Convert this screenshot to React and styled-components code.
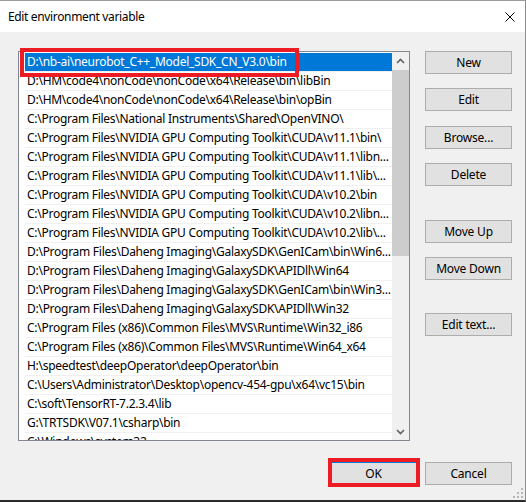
import React from 'react';
import styled, { createGlobalStyle } from 'styled-components';

const GlobalStyle = createGlobalStyle`
  html, body {
    margin: 0;
    padding: 0;
    background: #f0f0f0;
  }
  body {
    font-family: "Segoe UI", "Noto Sans", sans-serif;
    font-size: 12px;
    letter-spacing: -0.27px;
    color: #000;
  }
`;

const Window = styled.div`
  position: relative;
  width: 526px;
  height: 502px;
  box-sizing: border-box;
  display: flex;
  flex-direction: column;
  background: #f0f0f0;
  border-top: 1px solid #9c9c9c;
  border-right: 1px solid #8c8c8c;
  border-bottom: 2px solid #2b2b2b;
`;

const TitleBar = styled.div`
  height: 31px;
  flex: none;
  display: flex;
  align-items: center;
  justify-content: space-between;
  padding: 0 10px 0 8px;
  background: #fff;
`;

const Title = styled.span`
  font-size: 12px;
  line-height: 16px;
  letter-spacing: -0.35px;
`;

const CloseIcon = styled.svg`
  width: 10px;
  height: 10px;
  display: block;
`;

const Body = styled.div`
  flex: 1;
  display: flex;
  flex-direction: column;
  padding: 19px 13px 0 18px;
`;

const Main = styled.div`
  display: flex;
  align-items: flex-start;
`;

const ListBox = styled.div`
  position: relative;
  width: 392px;
  height: 390px;
  box-sizing: border-box;
  border: 1px solid #828790;
  background: #fff;
  display: flex;
`;

const Items = styled.div`
  flex: 1;
  overflow: hidden;
  padding: 1px 0 0 6px;
`;

const Row = styled.div`
  height: 18px;
  line-height: 18px;
  padding-left: 2px;
  border-bottom: 1px solid #f0f0f0;
  white-space: nowrap;
  overflow: hidden;
  background: ${p => (p.$selected ? '#0078d7' : 'transparent')};
  color: ${p => (p.$selected ? '#fff' : '#000')};
`;

const ScrollBar = styled.div`
  width: 17px;
  flex: none;
  display: flex;
  flex-direction: column;
  background: #f0f0f0;
`;

const ArrowButton = styled.div`
  height: 17px;
  flex: none;
  display: flex;
  align-items: center;
  justify-content: center;
`;

const Track = styled.div`
  flex: 1;
  padding-top: 1px;
`;

const Thumb = styled.div`
  height: 186px;
  background: #cdcdcd;
`;

const Buttons = styled.div`
  margin-left: 15px;
  display: flex;
  flex-direction: column;
`;

const Button = styled.button`
  width: 87px;
  height: 23px;
  box-sizing: border-box;
  margin: 0;
  margin-top: ${p => p.$gap || 0}px;
  padding: 0;
  font-family: inherit;
  font-size: 12px;
  letter-spacing: -0.2px;
  color: #000;
  background: #e1e1e1;
  border: 1px solid ${p => (p.$default ? '#0078d7' : '#adadad')};
  border-radius: 0;
`;

const Footer = styled.div`
  display: flex;
  justify-content: flex-end;
  gap: 8px;
  margin-top: 21px;
`;

const Marked = styled.div`
  position: relative;
  display: flex;
`;

// red annotation frame drawn over a control
const RedFrame = styled.div`
  position: absolute;
  box-sizing: border-box;
  border: 4px solid #ed1c24;
  pointer-events: none;
  left: ${p => p.$left}px;
  top: ${p => p.$top}px;
  width: ${p => p.$width}px;
  height: ${p => p.$height}px;
`;

const Grip = styled.svg`
  position: absolute;
  right: 2px;
  bottom: 2px;
  width: 10px;
  height: 10px;
`;

const paths = [
  'D:\\nb-ai\\neurobot_C++_Model_SDK_CN_V3.0\\bin',
  'D:\\HM\\code4\\nonCode\\nonCode\\x64\\Release\\bin\\libBin',
  'D:\\HM\\code4\\nonCode\\nonCode\\x64\\Release\\bin\\opBin',
  'C:\\Program Files\\National Instruments\\Shared\\OpenVINO\\',
  'C:\\Program Files\\NVIDIA GPU Computing Toolkit\\CUDA\\v11.1\\bin\\',
  'C:\\Program Files\\NVIDIA GPU Computing Toolkit\\CUDA\\v11.1\\libn...',
  'C:\\Program Files\\NVIDIA GPU Computing Toolkit\\CUDA\\v11.1\\lib\\...',
  'C:\\Program Files\\NVIDIA GPU Computing Toolkit\\CUDA\\v10.2\\bin',
  'C:\\Program Files\\NVIDIA GPU Computing Toolkit\\CUDA\\v10.2\\libn...',
  'C:\\Program Files\\NVIDIA GPU Computing Toolkit\\CUDA\\v10.2\\lib\\...',
  'D:\\Program Files\\Daheng Imaging\\GalaxySDK\\GenICam\\bin\\Win6...',
  'D:\\Program Files\\Daheng Imaging\\GalaxySDK\\APIDll\\Win64',
  'D:\\Program Files\\Daheng Imaging\\GalaxySDK\\GenICam\\bin\\Win3...',
  'D:\\Program Files\\Daheng Imaging\\GalaxySDK\\APIDll\\Win32',
  'C:\\Program Files (x86)\\Common Files\\MVS\\Runtime\\Win32_i86',
  'C:\\Program Files (x86)\\Common Files\\MVS\\Runtime\\Win64_x64',
  'H:\\speedtest\\deepOperator\\deepOperator\\bin',
  'C:\\Users\\Administrator\\Desktop\\opencv-454-gpu\\x64\\vc15\\bin',
  'C:\\soft\\TensorRT-7.2.3.4\\lib',
  'G:\\TRTSDK\\V07.1\\csharp\\bin',
  'C:\\Windows\\system32',
];

const sideButtons = [
  { label: 'New', gap: 0 },
  { label: 'Edit', gap: 14 },
  { label: 'Browse...', gap: 15 },
  { label: 'Delete', gap: 14 },
  { label: 'Move Up', gap: 34 },
  { label: 'Move Down', gap: 14 },
  { label: 'Edit text...', gap: 33 },
];

const Chevron = ({ up }) => (
  <svg width="9" height="6" viewBox="0 0 9 6">
    <polyline
      points={up ? '1,5 4.5,1.5 8,5' : '1,1 4.5,4.5 8,1'}
      fill="none"
      stroke="#606060"
      strokeWidth="1.6"
    />
  </svg>
);

export default function App() {
  return (
    <>
      <GlobalStyle />
      <Window>
        <TitleBar>
          <Title>Edit environment variable</Title>
          <CloseIcon viewBox="0 0 10 10">
            <path d="M0.5 0.5 L9.5 9.5 M9.5 0.5 L0.5 9.5" stroke="#000" strokeWidth="1" />
          </CloseIcon>
        </TitleBar>
        <Body>
          <Main>
            <ListBox>
              <Items>
                {paths.map((p, i) => (
                  <Row key={p} $selected={i === 0}>{p}</Row>
                ))}
              </Items>
              <ScrollBar>
                <ArrowButton><Chevron up /></ArrowButton>
                <Track><Thumb /></Track>
                <ArrowButton><Chevron /></ArrowButton>
              </ScrollBar>
              <RedFrame $left={1} $top={-4} $width={279} $height={29} />
            </ListBox>
            <Buttons>
              {sideButtons.map(b => (
                <Button key={b.label} $gap={b.gap}>{b.label}</Button>
              ))}
            </Buttons>
          </Main>
          <Footer>
            <Marked>
              <Button $default>OK</Button>
              <RedFrame $left={-2} $top={-4} $width={92} $height={29} />
            </Marked>
            <Button>Cancel</Button>
          </Footer>
        </Body>
        <Grip viewBox="0 0 10 10">
          {[[8, 0], [8, 4], [4, 4], [8, 8], [4, 8], [0, 8]].map(([x, y]) => (
            <rect key={`${x}-${y}`} x={x} y={y} width="2" height="2" fill="#b8b8b8" />
          ))}
        </Grip>
      </Window>
    </>
  );
}
